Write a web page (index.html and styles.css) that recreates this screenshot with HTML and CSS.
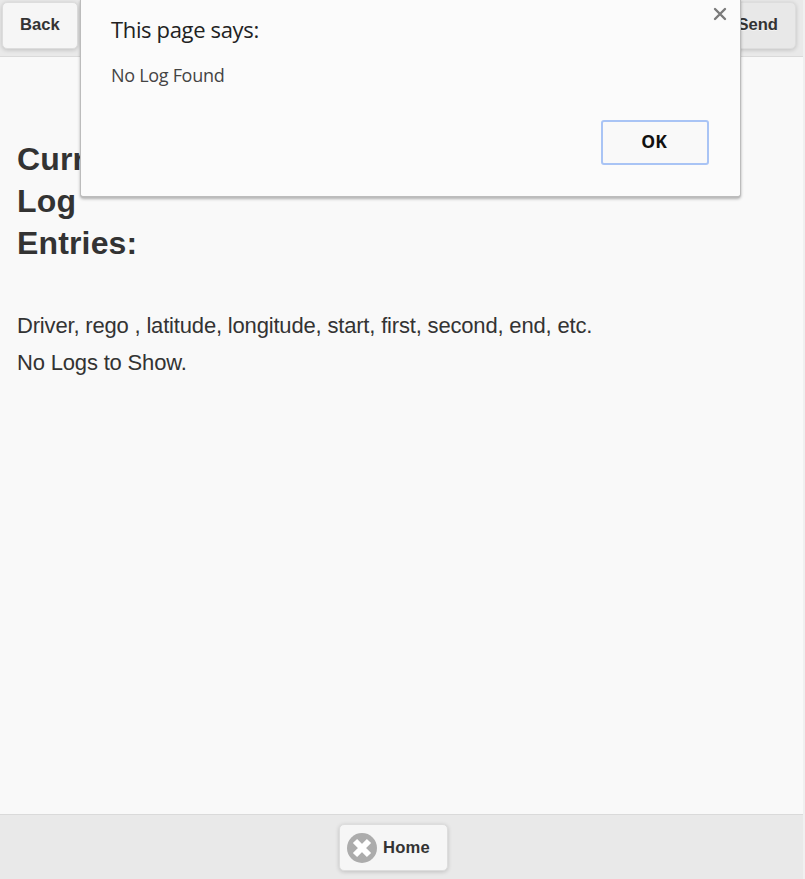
FILE: index.html
```html
<!DOCTYPE html>
<html lang="en">
<head>
<meta charset="utf-8">
<title>Log Entries</title>
<link rel="stylesheet" href="styles.css">
</head>
<body>
<div class="page">
  <header class="bar header">
    <button class="btn">Back</button>
    <button class="btn btn-active">Send</button>
  </header>
  <main class="content">
    <h1 class="title">Current<br>Log<br>Entries:</h1>
    <p class="line">Driver, rego , latitude, longitude, start, first, second, end, etc.</p>
    <p class="line">No Logs to Show.</p>
  </main>
  <footer class="bar footer">
    <button class="btn home">
      <svg class="home-icon" viewBox="0 0 30 30" aria-hidden="true">
        <circle cx="15" cy="15" r="15" fill="#acacac"/>
        <path d="M8 8 22 22M22 8 8 22" stroke="#fff" stroke-width="6"/>
      </svg>
      <span>Home</span>
    </button>
  </footer>
</div>
<div class="dialog" role="alertdialog">
  <svg class="close" viewBox="0 0 14 14" aria-hidden="true">
    <path d="M2 2 12 12M12 2 2 12" stroke="#7b7b7b" stroke-width="2.4" stroke-linecap="round"/>
  </svg>
  <h2 class="dialog-title">This page says:</h2>
  <p class="dialog-text">No Log Found</p>
  <button class="ok">OK</button>
</div>
</body>
</html>
```
FILE: styles.css
```css
* { box-sizing: border-box; }
body {
  margin: 0;
  background: #f0f0f0;
  color: #333;
  font-family: "Liberation Sans", Arial, sans-serif;
}
.page {
  display: flex;
  flex-direction: column;
  width: 803px;
  height: 879px;
  background: #f9f9f9;
}
.bar { display: flex; background: #e9e9e9; }
.header {
  height: 57px;
  padding: 2px 7px 0 3px;
  justify-content: space-between;
  border-bottom: 1px solid #dadada;
}
.footer {
  height: 65px;
  padding: 9px 0 0 340px;
  border-top: 1px solid #dadada;
}
.btn {
  height: 47px;
  padding: 0 17px 2px;
  border: 1px solid #ddd;
  border-radius: 5px;
  background: #f6f6f6;
  box-shadow: 0 1px 4px rgba(0, 0, 0, .18);
  color: #333;
  font: bold 16.6px "Liberation Sans", Arial, sans-serif;
  text-shadow: 0 1px 0 #f3f3f3;
}
.header .btn { margin-left: -1px; }
.header .btn-active { background: #e8e8e8; }
.home {
  display: flex;
  align-items: center;
  gap: 6px;
  width: 109px;
  margin-left: -1px;
  padding: 0 7px;
  letter-spacing: .2px;
}
.home span { margin-top: 1px; }
.home-icon { width: 30px; height: 30px; flex: none; }
.content { flex: 1; padding: 81px 17px 0; }
.title {
  margin: 0 0 43px;
  font-size: 32px;
  letter-spacing: .15px;
  line-height: 42px;
}
.line {
  margin: 0;
  font-size: 22px;
  letter-spacing: -.176px;
  line-height: 37px;
}
.dialog {
  position: absolute;
  top: 0;
  left: 80px;
  width: 661px;
  height: 198px;
  padding: 14px 31px 0 30px;
  border: 1px solid #bcbcbc;
  border-width: 0 1px 2px;
  border-radius: 0 0 4px 4px;
  background: #fbfbfb;
  box-shadow: 0 1px 3px rgba(0, 0, 0, .3);
  font-family: "Open Sans", "Noto Sans", sans-serif;
}
.close { position: absolute; top: 7px; right: 13px; width: 14px; height: 14px; }
.dialog-title {
  margin: 0;
  color: #222;
  font-size: 22px;
  font-weight: 400;
  letter-spacing: -.35px;
  line-height: 31px;
}
.dialog-text {
  margin: 18px 0 0;
  color: #444;
  font-size: 18px;
  letter-spacing: -.3px;
  line-height: 24px;
}
.ok {
  display: block;
  width: 108px;
  height: 45px;
  margin: 33px 0 0 auto;
  padding: 0 2px 4px 0;
  border: 2px solid #a9c4f5;
  border-radius: 3px;
  background: #f9f9f9;
  color: #111;
  font: bold 17.5px "Open Sans", "Noto Sans", sans-serif;
}
```
